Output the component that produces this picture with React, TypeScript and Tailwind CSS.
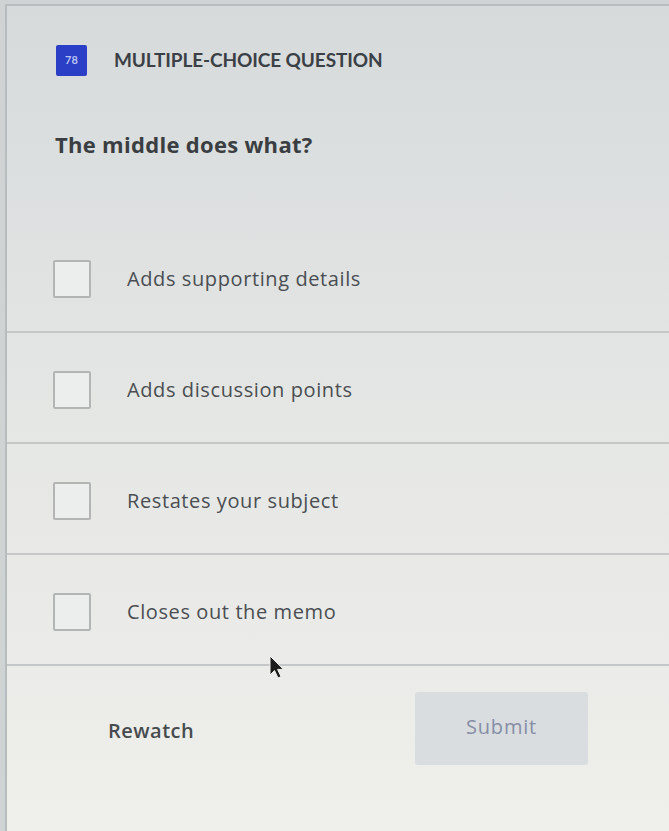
import React from "react";

type Choice = { id: number; label: string };

const choices: Choice[] = [
  { id: 1, label: "Adds supporting details" },
  { id: 2, label: "Adds discussion points" },
  { id: 3, label: "Restates your subject" },
  { id: 4, label: "Closes out the memo" },
];

const bodyFont = { fontFamily: "'Open Sans', 'Liberation Sans', sans-serif" };

function Pointer() {
  return (
    <svg
      className="absolute left-[268px] top-[655px]"
      width="18"
      height="26"
      viewBox="0 0 18 26"
    >
      <path
        d="M2 1 L2 20 L6.5 15.5 L10 23 L13 21.6 L9.6 14.4 L15.5 14.4 Z"
        fill="#1c1c1c"
        stroke="#f1f1ee"
        strokeWidth="1"
        strokeLinejoin="round"
      />
    </svg>
  );
}

export default function App() {
  return (
    <div
      className="relative h-[831px] w-[669px] overflow-hidden bg-[#cfd3d4] pl-[5px] pt-[4px]"
      style={{ fontFamily: "Lato, 'Liberation Sans', sans-serif" }}
    >
      <div className="h-full border-l-2 border-t-2 border-[#b7bcbe] bg-linear-to-b from-[#d6dadb] via-[#e5e7e5] to-[#efefeb]">
        {/* question type header */}
        <div className="box-content flex h-[34px] items-center pl-[49px] pt-[37px]">
          <div className="flex h-[31px] w-[31px] items-center justify-center rounded-[2px] bg-[#2a3ec6] text-[11px] font-bold text-[#b9c3f2]">
            78
          </div>
          <span className="ml-[27px] text-[19px] font-bold tracking-[-0.1px] text-[#3b4046]">
            MULTIPLE-CHOICE QUESTION
          </span>
        </div>

        <h1
          className="mt-[53px] pl-[48px] text-[22px] leading-[28px] font-bold tracking-[0.3px] text-[#3a3e42]"
          style={bodyFont}
        >
          The middle does what?
        </h1>

        <ul className="mt-[64px]" style={bodyFont}>
          {choices.map((c) => (
            <li
              key={c.id}
              className="flex h-[111px] items-center border-b-2 border-[#c5c7c6] pt-1 pl-[46px]"
            >
              <span className="h-[38px] w-[38px] rounded-[2px] border-2 border-[#b3b5b5] bg-[#eceeed]" />
              <span className="ml-[36px] text-[20px] font-medium tracking-[0.6px] text-[#4a4e52]">
                {c.label}
              </span>
            </li>
          ))}
        </ul>

        <div
          className="mt-[26px] flex h-[73px] items-center pl-[101px] pr-[81px]"
          style={bodyFont}
        >
          <button className="pt-1 text-[20px] font-semibold tracking-[0.5px] text-[#474b4e]">
            Rewatch
          </button>
          <button className="ml-auto flex h-[73px] w-[173px] items-center justify-center rounded-[3px] bg-[#d9dde0] pb-1 text-[20px] font-medium tracking-[0.8px] text-[#868ea6]">
            Submit
          </button>
        </div>
      </div>
      <Pointer />
    </div>
  );
}
